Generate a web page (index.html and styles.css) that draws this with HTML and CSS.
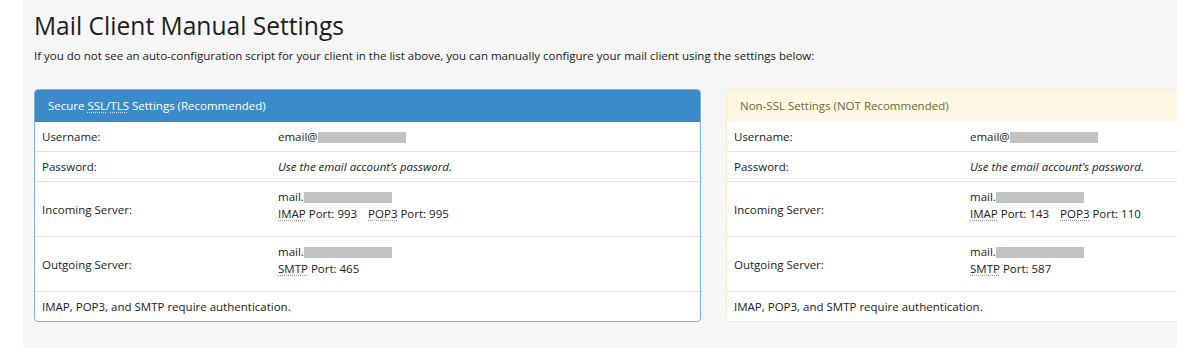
FILE: index.html
```html
<!DOCTYPE html>
<html lang="en">
<head>
    <meta charset="UTF-8">
    <meta name="viewport" content="width=device-width, initial-scale=1.0">
    <title>Mail Client Manual Settings</title>
    <link rel="stylesheet" href="styles.css">
</head>
<body>
    <div class="page">
        <h1>Mail Client Manual Settings</h1>
        <p class="intro">If you do not see an auto-configuration script for your client in the list above, you can manually configure your mail client using the settings below:</p>

        <div class="panels">
            <!-- Secure settings -->
            <div class="panel panel-secure">
                <div class="panel-heading">Secure <abbr title="Secure Sockets Layer">SSL</abbr>/<abbr title="Transport Layer Security">TLS</abbr> Settings (Recommended)</div>
                <table class="settings">
                    <tr>
                        <td class="label">Username:</td>
                        <td>email@<span class="redacted"></span></td>
                    </tr>
                    <tr>
                        <td class="label">Password:</td>
                        <td><em>Use the email account’s password.</em></td>
                    </tr>
                    <tr>
                        <td class="label">Incoming Server:</td>
                        <td>
                            <div class="server">
                                mail.<span class="redacted"></span><br>
                                <abbr title="Internet Message Access Protocol">IMAP</abbr> Port: 993 <span class="sep"></span><abbr title="Post Office Protocol 3">POP3</abbr> Port: 995
                            </div>
                        </td>
                    </tr>
                    <tr>
                        <td class="label">Outgoing Server:</td>
                        <td>
                            <div class="server">
                                mail.<span class="redacted"></span><br>
                                <abbr title="Simple Mail Transfer Protocol">SMTP</abbr> Port: 465
                            </div>
                        </td>
                    </tr>
                    <tr>
                        <td colspan="2">IMAP, POP3, and SMTP require authentication.</td>
                    </tr>
                </table>
            </div>

            <!-- Non-SSL settings -->
            <div class="panel panel-plain">
                <div class="panel-heading">Non-SSL Settings (NOT Recommended)</div>
                <table class="settings">
                    <tr>
                        <td class="label">Username:</td>
                        <td>email@<span class="redacted"></span></td>
                    </tr>
                    <tr>
                        <td class="label">Password:</td>
                        <td><em>Use the email account’s password.</em></td>
                    </tr>
                    <tr>
                        <td class="label">Incoming Server:</td>
                        <td>
                            <div class="server">
                                mail.<span class="redacted"></span><br>
                                <abbr title="Internet Message Access Protocol">IMAP</abbr> Port: 143 <span class="sep"></span><abbr title="Post Office Protocol 3">POP3</abbr> Port: 110
                            </div>
                        </td>
                    </tr>
                    <tr>
                        <td class="label">Outgoing Server:</td>
                        <td>
                            <div class="server">
                                mail.<span class="redacted"></span><br>
                                <abbr title="Simple Mail Transfer Protocol">SMTP</abbr> Port: 587
                            </div>
                        </td>
                    </tr>
                    <tr>
                        <td colspan="2">IMAP, POP3, and SMTP require authentication.</td>
                    </tr>
                </table>
            </div>
        </div>
    </div>
</body>
</html>
```

FILE: styles.css
```css
body {
    margin: 0;
    background: #ffffff;
    font-family: 'Open Sans', 'Liberation Sans', sans-serif;
    font-size: 11.5px;
    color: #222222;
}

.page {
    width: 1154px;
    margin-left: 23px;
    padding: 8px 0 26px 11px;
    box-sizing: border-box;
    background: #f6f6f6;
    overflow: hidden;
}

h1 {
    margin: 0;
    font-size: 24.6px;
    font-weight: 400;
    line-height: 36px;
    color: #1e1e1e;
}

.intro {
    margin: 3px 0 25px;
    line-height: 17px;
}

.panels {
    display: flex;
    gap: 25px;
}

.panel {
    flex: 0 0 667px;
    box-sizing: border-box;
    border: 1px solid #ddd;
    border-radius: 4px;
    background: #ffffff;
    overflow: hidden;
}

.panel-heading {
    padding: 8px 13px;
    line-height: 16px;
}

.panel-secure {
    border-color: #7fb2dc;
}

.panel-secure .panel-heading {
    background: #3b8bca;
    color: #ffffff;
    font-weight: 500;
}

.panel-plain {
    border-color: #faebcc;
}

.panel-plain .panel-heading {
    background: #fcf8e3;
    color: #7d6236;
}

abbr {
    text-decoration: underline dotted #999;
    text-underline-offset: 2px;
}

.panel-secure .panel-heading abbr {
    text-decoration-color: #c8ddef;
}

.settings {
    width: 100%;
    border-collapse: collapse;
}

.settings td {
    padding: 6px 7px;
    line-height: 17px;
    border-top: 1px solid #e2e2e2;
    vertical-align: middle;
}

.settings tr:first-child td {
    border-top: none;
}

.settings td.label {
    width: 222px;
}

.server {
    margin-bottom: 8px;
}

.redacted {
    display: inline-block;
    width: 88px;
    height: 11px;
    background: #c2c2c2;
    vertical-align: -2px;
}

.sep {
    display: inline-block;
    width: 8px;
}
```
